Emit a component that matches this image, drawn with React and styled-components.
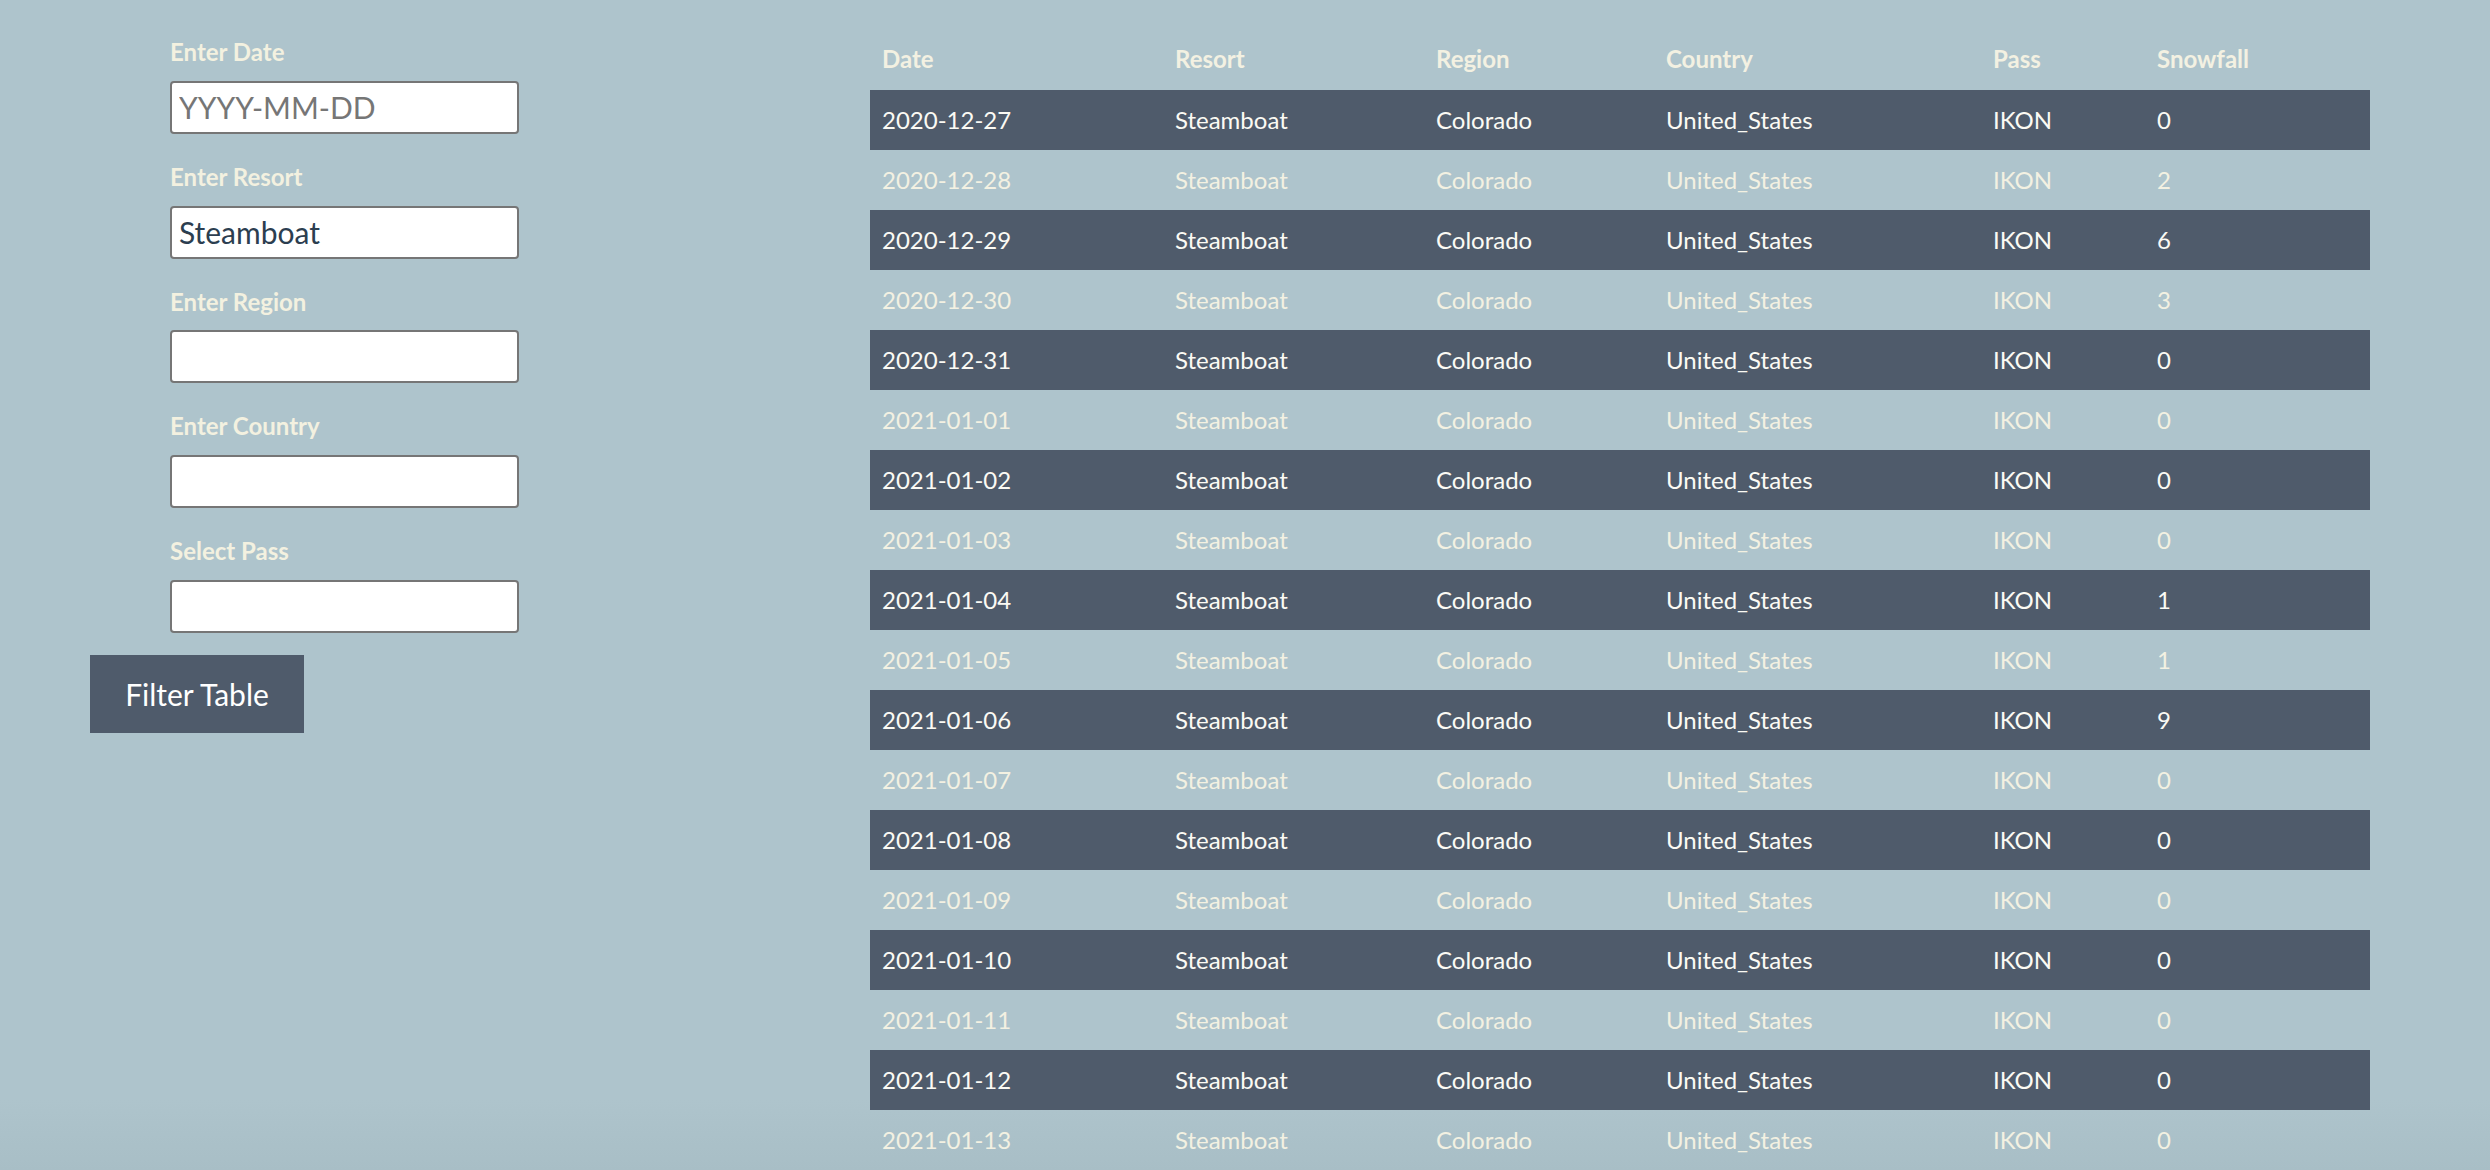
import React, { useState } from "react";
import styled, { createGlobalStyle } from "styled-components";

const snowfall = [0, 2, 6, 3, 0, 0, 0, 0, 1, 1, 9, 0, 0, 0, 0, 0, 0, 0, 0, 2, 4, 0];

const makeRows = () => {
  const start = new Date(Date.UTC(2020, 11, 27));
  return snowfall.map((snow, i) => {
    const d = new Date(start.getTime() + i * 86400000);
    return {
      date: d.toISOString().slice(0, 10),
      resort: "Steamboat",
      region: "Colorado",
      country: "United_States",
      pass: "IKON",
      snowfall: snow,
    };
  });
};

const columns = [
  { key: "date", title: "Date", width: 293 },
  { key: "resort", title: "Resort", width: 261 },
  { key: "region", title: "Region", width: 230 },
  { key: "country", title: "Country", width: 327 },
  { key: "pass", title: "Pass", width: 164 },
  { key: "snowfall", title: "Snowfall", width: 225 },
];

const fields = [
  { label: "Enter Date", placeholder: "YYYY-MM-DD", value: "" },
  { label: "Enter Resort", placeholder: "", value: "Steamboat" },
  { label: "Enter Region", placeholder: "", value: "" },
  { label: "Enter Country", placeholder: "", value: "" },
  { label: "Select Pass", placeholder: "", value: "" },
];

const App = () => {
  const [rows] = useState(makeRows);
  const [values, setValues] = useState(fields.map((f) => f.value));

  const update = (i, v) => {
    const next = [...values];
    next[i] = v;
    setValues(next);
  };

  return (
    <>
      <GlobalStyle />
      <StyledPage>
        <StyledForm onSubmit={(e) => e.preventDefault()}>
          <StyledFields>
            {fields.map((field, i) => (
              <StyledField key={field.label}>
                <label>{field.label}</label>
                <input
                  type="text"
                  placeholder={field.placeholder}
                  value={values[i]}
                  onChange={(e) => update(i, e.target.value)}
                />
              </StyledField>
            ))}
          </StyledFields>
          <FilterButton type="submit">Filter Table</FilterButton>
        </StyledForm>
        <StyledTable>
          <colgroup>
            {columns.map((col) => (
              <col key={col.key} style={{ width: col.width }} />
            ))}
          </colgroup>
          <thead>
            <tr>
              {columns.map((col) => (
                <th key={col.key}>{col.title}</th>
              ))}
            </tr>
          </thead>
          <tbody>
            {rows.map((row, i) => (
              <TableRow key={row.date} $dark={i % 2 === 0}>
                {columns.map((col) => (
                  <td key={col.key}>{row[col.key]}</td>
                ))}
              </TableRow>
            ))}
          </tbody>
        </StyledTable>
      </StyledPage>
    </>
  );
};

const GlobalStyle = createGlobalStyle`
  html, body {
    margin: 0;
    padding: 0;
    font-family: Lato, "Open Sans", sans-serif;
  }
  body {
    background-color: #aec4cc;
    background-image: linear-gradient(
      to bottom,
      #aec4cc 0,
      #aec4cc calc(100vh - 70px),
      #a8bec6 100vh
    );
    background-attachment: fixed;
    background-repeat: no-repeat;
  }
`;

const StyledPage = styled.div`
  display: grid;
  grid-template-columns: 870px 1500px;
  align-items: start;
  min-height: 100vh;
`;

const StyledForm = styled.form`
  padding: 38px 0 0 90px;
  display: flex;
  flex-direction: column;
  align-items: flex-start;
`;

const StyledFields = styled.div`
  padding-left: 80px;
  display: flex;
  flex-direction: column;
  gap: 29px;
`;

const StyledField = styled.div`
  display: flex;
  flex-direction: column;
  align-items: flex-start;
  label {
    font-size: 24px;
    font-weight: 700;
    line-height: 1.2;
    color: #f3f1e0;
  }
  input {
    margin-top: 14px;
    box-sizing: border-box;
    width: 349px;
    height: 53px;
    padding: 6px 7px;
    border: 2px solid #767676;
    border-radius: 4px;
    background: #ffffff;
    font-family: Lato, sans-serif;
    font-size: 30px;
    color: #2c3e50;
    outline: none;
    &::placeholder {
      color: #767676;
    }
  }
`;

const FilterButton = styled.button`
  margin-top: 22px;
  box-sizing: border-box;
  width: 214px;
  height: 78px;
  border: none;
  border-radius: 0;
  background: #4f5b6b;
  color: #ffffff;
  font-family: Lato, sans-serif;
  font-size: 30px;
  cursor: pointer;
`;

const StyledTable = styled.table`
  margin-top: 36px;
  width: 1500px;
  table-layout: fixed;
  border-collapse: collapse;
  color: #f3f1e2;
  th {
    text-align: left;
    font-size: 24px;
    font-weight: 700;
    line-height: 1.2;
    padding: 9px 12px 16px;
  }
  td {
    font-size: 24px;
    line-height: 1.2;
    padding: 2px 12px 0;
    height: 60px;
    box-sizing: border-box;
  }
`;

const TableRow = styled.tr`
  background: ${(p) => (p.$dark ? "#4f5b6b" : "transparent")};
  color: ${(p) => (p.$dark ? "#fbfaf4" : "#f3f1e2")};
`;

export default App;
